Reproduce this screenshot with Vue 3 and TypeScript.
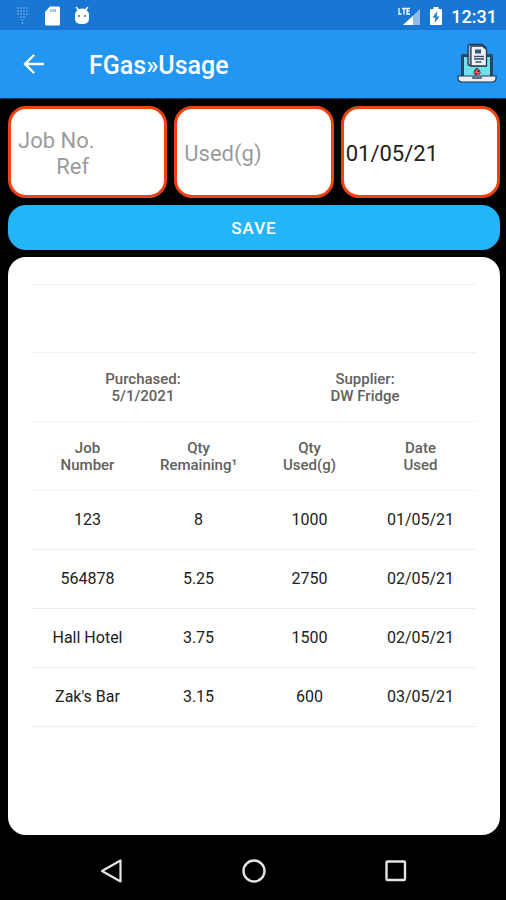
<script setup lang="ts">
import { ref } from 'vue'

interface UsageEntry {
  job: string
  remaining: string
  used: string
  date: string
}

const jobRef = ref('')
const usedGrams = ref('')
const usageDate = ref('01/05/21')
const jobHint = 'Job No.\n       Ref'

const entries = ref<UsageEntry[]>([
  { job: '123', remaining: '8', used: '1000', date: '01/05/21' },
  { job: '564878', remaining: '5.25', used: '2750', date: '02/05/21' },
  { job: 'Hall Hotel', remaining: '3.75', used: '1500', date: '02/05/21' },
  { job: "Zak's Bar", remaining: '3.15', used: '600', date: '03/05/21' },
])

function save() {
  if (!jobRef.value || !usedGrams.value) return
  const last = Number(entries.value[entries.value.length - 1].remaining)
  entries.value.push({
    job: jobRef.value,
    remaining: String(Number((last - Number(usedGrams.value) / 1000).toFixed(2))),
    used: usedGrams.value,
    date: usageDate.value,
  })
  jobRef.value = ''
  usedGrams.value = ''
}
</script>

<template>
  <div class="screen">
    <div class="status">
      <div class="status-group notices">
        <svg class="ico" viewBox="0 0 20 20" aria-hidden="true">
          <g fill="#8fc0ee">
            <circle v-for="n in 12" :key="n" :cx="6 + ((n - 1) % 4) * 3" :cy="2 + Math.floor((n - 1) / 4) * 3" r="0.8" />
            <circle cx="9" cy="11" r="0.8" />
            <circle cx="12" cy="11" r="0.8" />
            <circle cx="10.500" cy="14" r="0.8" />
            <circle cx="10.500" cy="17" r="0.8" />
          </g>
        </svg>
        <svg class="ico" viewBox="0 0 20 20" aria-hidden="true">
          <path d="M8 0.500h8.500a1.500 1.500 0 0 1 1.500 1.500v16a1.500 1.500 0 0 1-1.500 1.500h-12a1.500 1.500 0 0 1-1.500-1.500V6z" fill="#fff" />
          <path d="M8 3h6v3H8z" fill="#8fb4de" />
          <path d="M10 3v3M12 3v3" stroke="#fff" stroke-width="0.700" />
        </svg>
        <svg class="ico" viewBox="0 0 20 20" aria-hidden="true">
          <path d="M3 9a7 6.500 0 0 1 14 0v4a5 5 0 0 1-5 5H8a5 5 0 0 1-5-5z" fill="#fff" />
          <path d="M4.500 1.500l2.500 3M15.500 1.500L13 4.500" stroke="#fff" stroke-width="1.600" stroke-linecap="round" />
          <circle cx="7" cy="10" r="1" fill="#1976d2" />
          <circle cx="13" cy="10" r="1" fill="#1976d2" />
        </svg>
      </div>
      <div class="status-group system">
        <svg class="signal" viewBox="0 0 24 20" aria-hidden="true">
          <path d="M23 3v16H6z" fill="#8fbcea" />
          <path d="M16 10v9H6z" fill="#fff" />
          <path d="M2 2v6h2.500M5 2.500h4M7 2.500V8.500M13 2.500h-3V8h3M10 5h2.500" fill="none" stroke="#fff" stroke-width="1.300" />
        </svg>
        <svg class="battery" viewBox="0 0 14 20" aria-hidden="true">
          <path d="M4.500 1h5v2H12a1 1 0 0 1 1 1v14a1 1 0 0 1-1 1H2a1 1 0 0 1-1-1V4a1 1 0 0 1 1-1h2.500z" fill="#fff" />
          <path d="M8.500 5L3.500 11.500h3L5.500 17l5-6.500h-3z" fill="#1976d2" />
        </svg>
        <span class="clock">12:31</span>
      </div>
    </div>

    <header class="appbar">
      <button class="icon-btn" type="button" aria-label="Back">
        <svg viewBox="0 0 24 24" width="24" height="24">
          <path d="M22 12H3M12 3l-9 9 9 9" fill="none" stroke="#fff" stroke-width="2.400" />
        </svg>
      </button>
      <h1>FGas»Usage</h1>
      <button class="icon-btn" type="button" aria-label="Report">
        <svg viewBox="0 0 42 42" width="42" height="42">
          <path d="M5 33V13q0-2 2-2h28q2 0 2 2v20z" fill="#27475f" />
          <path d="M8 14h26v19H8z" fill="#70dfeb" />
          <path d="M2 33h38v2q0 4-4 4H6q-4 0-4-4z" fill="#e6edf5" stroke="#24384f" stroke-width="1.200" />
          <path d="M16 33.500h10v1.500q0 1-1 1h-8q-1 0-1-1z" fill="#5c6c82" />
          <path d="M12 3.500q0-2 2-2h12l4 3v18H14q-2 0-2-2z" fill="#9fb0c9" stroke="#24384f" stroke-width="1.300" />
          <path d="M15 3h11.500l4 3.500V23H15z" fill="#edf2fa" stroke="#24384f" stroke-width="1.300" />
          <path d="M19 6.500h6v4h-6z" fill="#2c5a78" />
          <path d="M18 13.500h10M18 16h10M19.500 19h6" stroke="#3b4c63" stroke-width="1.400" />
          <path d="M21 24.500q3.500 3 3.500 5t-3.500 3q-3.500-1-3.500-3t3.500-5z" fill="#24384f" />
          <path d="M22 26l-3 3.500h4l-2 2.500" fill="none" stroke="#ff594c" stroke-width="1.500" />
        </svg>
      </button>
    </header>

    <form class="entry" @submit.prevent="save">
      <div class="fields">
        <label class="field">
          <textarea v-model="jobRef" class="control" rows="2" :placeholder="jobHint" aria-label="Job number reference"></textarea>
        </label>
        <label class="field">
          <input v-model="usedGrams" class="control" type="text" inputmode="decimal" placeholder="Used(g)" aria-label="Used in grams" />
        </label>
        <label class="field date">
          <input v-model="usageDate" class="control" type="text" aria-label="Date used" />
        </label>
      </div>
      <button class="save" type="submit">SAVE</button>
    </form>

    <main class="card">
      <table>
        <thead>
          <tr><td colspan="4"></td></tr>
          <tr>
            <th colspan="2">Purchased:<br />5/1/2021</th>
            <th colspan="2">Supplier:<br />DW Fridge</th>
          </tr>
          <tr>
            <th scope="col">Job<br />Number</th>
            <th scope="col">Qty<br />Remaining¹</th>
            <th scope="col">Qty<br />Used(g)</th>
            <th scope="col">Date<br />Used</th>
          </tr>
        </thead>
        <tbody>
          <tr v-for="(entry, i) in entries" :key="i">
            <td>{{ entry.job }}</td>
            <td>{{ entry.remaining }}</td>
            <td>{{ entry.used }}</td>
            <td>{{ entry.date }}</td>
          </tr>
        </tbody>
      </table>
    </main>

    <nav class="navbar" aria-label="System">
      <button class="icon-btn" type="button" aria-label="Back">
        <svg viewBox="0 0 24 24" width="24" height="24">
          <path d="M20.500 1.500v21L2 12z" fill="none" stroke="#e4e4e4" stroke-width="2.200" stroke-linejoin="round" />
        </svg>
      </button>
      <button class="icon-btn" type="button" aria-label="Home">
        <svg viewBox="0 0 24 24" width="24" height="24">
          <circle cx="12" cy="12" r="10.500" fill="none" stroke="#e4e4e4" stroke-width="2.400" />
        </svg>
      </button>
      <button class="icon-btn" type="button" aria-label="Recent apps">
        <svg viewBox="0 0 24 24" width="24" height="24">
          <rect x="2.500" y="2.500" width="18.500" height="18.500" rx="1" fill="none" stroke="#e4e4e4" stroke-width="2.400" />
        </svg>
      </button>
    </nav>
  </div>
</template>

<style>
body {
  margin: 0;
  background: #000;
}
</style>

<style scoped>
.screen {
  display: flex;
  flex-direction: column;
  min-height: 100vh;
  background: #000;
  font-family: Roboto, "Liberation Sans", sans-serif;
  color: #212121;
}

.status {
  display: flex;
  justify-content: space-between;
  align-items: center;
  box-sizing: border-box;
  height: 30px;
  padding: 1px 9px 0 12px;
  background: #1976d2;
}

.status-group {
  display: flex;
  align-items: center;
}

.notices {
  gap: 10px;
}

.system {
  gap: 8px;
}

.ico {
  width: 20px;
  height: 20px;
}

.signal {
  width: 24px;
  height: 20px;
}

.battery {
  width: 14px;
  height: 20px;
}

.clock {
  padding-top: 2px;
  color: #fff;
  font-size: 18px;
  font-weight: 500;
  line-height: 24px;
}

.appbar {
  display: flex;
  align-items: center;
  height: 68px;
  padding: 0 8px 0 22px;
  background: #2196f3;
  border-bottom: 1px solid #0c3a60;
}

.icon-btn {
  display: flex;
  padding: 0;
  border: 0;
  background: none;
}

h1 {
  flex: 1;
  margin: 0;
  padding: 4px 0 0 43px;
  color: #fff;
  font-size: 25px;
  font-weight: 500;
  line-height: 32px;
}

.entry {
  display: flex;
  flex-direction: column;
  gap: 7px;
  padding: 7px 6px 7px 8px;
}

.fields {
  display: grid;
  grid-template-columns: repeat(3, minmax(0, 1fr));
  gap: 7px;
}

.field {
  display: flex;
  align-items: center;
  box-sizing: border-box;
  height: 92px;
  padding: 3px 7px 0;
  border: 3px solid #ed4313;
  border-radius: 18px;
  background: #fff;
}

.field.date {
  padding: 3px 2px 0;
}

.control {
  display: block;
  box-sizing: border-box;
  width: 100%;
  margin: 0;
  padding: 0;
  border: 0;
  outline: 0;
  background: none;
  color: #212121;
  font: 400 22px/26px Roboto, "Liberation Sans", sans-serif;
  resize: none;
  overflow: hidden;
}

.control::placeholder {
  color: #9b9b9b;
  opacity: 1;
}

.save {
  height: 45px;
  padding: 0;
  border: 0;
  border-radius: 18px;
  background: #24b5f8;
  color: #fff;
  font: 500 17px/20px Roboto, "Liberation Sans", sans-serif;
  letter-spacing: 1px;
}

.card {
  flex: 1;
  margin: 0 6px 0 8px;
  padding: 27px 24px 24px;
  border-radius: 18px;
  background: #fff;
}

table {
  width: 100%;
  table-layout: fixed;
  border-collapse: separate;
  border-spacing: 0;
  border-top: 1px solid #f2f2f2;
}

th,
td {
  box-sizing: border-box;
  padding: 0;
  border-bottom: 1px solid #ededed;
  text-align: center;
}

thead td {
  height: 68px;
  border-color: #f2f2f2;
}

thead th {
  height: 69px;
  padding-top: 2px;
  border-color: #f2f2f2;
  color: #616161;
  font-size: 15px;
  font-weight: 500;
  line-height: 17px;
}

tbody td {
  height: 59px;
  font-size: 16px;
  line-height: 20px;
}

.navbar {
  display: flex;
  justify-content: space-between;
  align-items: center;
  height: 65px;
  padding: 6px 98px 0 100px;
  box-sizing: border-box;
}
</style>
